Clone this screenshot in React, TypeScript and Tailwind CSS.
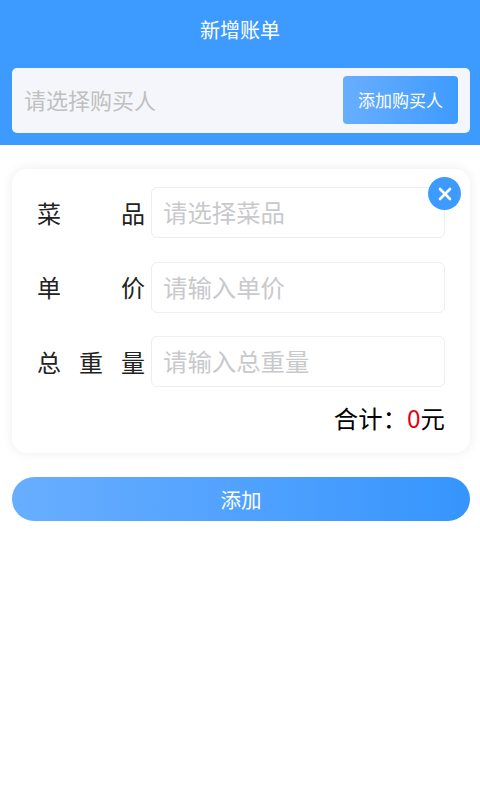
const FONT = "font-['Noto_Sans_CJK_SC','Noto_Sans',sans-serif]"

const rows = [
  { label: ["菜", "品"], placeholder: "请选择菜品" },
  { label: ["单", "价"], placeholder: "请输入单价" },
  { label: ["总", "重", "量"], placeholder: "请输入总重量" },
]

export default function App() {
  return (
    <div className={`${FONT} w-[480px] h-[800px] bg-white overflow-hidden`}>
      <div className="bg-[#3d9bff] h-[145px] pl-3 pr-[10px] flex flex-col">
        <div className="h-[60px] pr-[2px] flex items-center justify-center text-white text-[20px]">新增账单</div>
        <div className="mt-2 h-[65px] bg-[#f5f6fb] rounded-[5px] flex items-center justify-between pl-3 pr-3">
          <span className="text-[22px] leading-[30px] mb-[3px] text-[#c0c0c0]">请选择购买人</span>
          <button className="w-[115px] h-[48px] mb-[1px] rounded-[4px] bg-gradient-to-r from-[#68aeff] to-[#3d9bff] text-white text-[17px]">
            添加购买人
          </button>
        </div>
      </div>

      <div className="relative ml-3 mr-[10px] mt-6 h-[284px] bg-white rounded-[15px] shadow-[0_0_12px_rgba(0,0,0,0.08)] pt-[18px] pl-[25px] pr-[25px]">
        <div className="flex flex-col gap-[23.5px]">
          {rows.map((r) => (
            <div key={r.placeholder} className="flex items-center gap-[6px]">
              <div className="w-[108px] flex justify-between text-[24px] leading-none text-[#222222]">
                {r.label.map((c) => (
                  <span key={c}>{c}</span>
                ))}
              </div>
              <div className="flex-1 h-[51px] border border-[#eeeeee] rounded-[6px] flex items-center pl-[11px] text-[24.4px] text-[#c8c9cc]">
                {r.placeholder}
              </div>
            </div>
          ))}
        </div>
        <div className="mt-[11px] text-right text-[24.4px] leading-[40px] text-black">
          合计：<span className="text-[#e60012]">0</span>元
        </div>
        <div className="absolute right-[9px] top-[8px] w-[33px] h-[33px] rounded-full bg-[#3d9bff] flex items-center justify-center">
          <svg width="14" height="14" viewBox="0 0 14 14" fill="none" stroke="white" strokeWidth="2.6" strokeLinecap="round">
            <path d="M2 2 L12 12 M12 2 L2 12" />
          </svg>
        </div>
      </div>

      <div className="ml-3 mr-[10px] mt-6">
        <button className="w-full h-[44px] rounded-full bg-gradient-to-r from-[#68aeff] to-[#3595fd] text-white text-[20.5px]">
          添加
        </button>
      </div>
    </div>
  )
}
